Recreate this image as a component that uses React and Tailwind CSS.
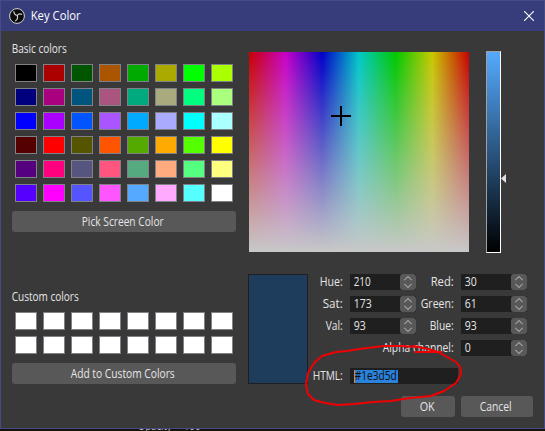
import React from "react";

const BASIC = [
  ["#000000", "#aa0000", "#005500", "#aa5500", "#00aa00", "#aaaa00", "#00ff00", "#aaff00"],
  ["#00007f", "#aa007f", "#00557f", "#aa557f", "#00aa7f", "#aaaa7f", "#00ff7f", "#aaff7f"],
  ["#0000ff", "#aa00ff", "#0055ff", "#aa55ff", "#00aaff", "#aaaaff", "#00ffff", "#aaffff"],
  ["#550000", "#ff0000", "#555500", "#ff5500", "#55aa00", "#ffaa00", "#55ff00", "#ffff00"],
  ["#55007f", "#ff007f", "#55557f", "#ff557f", "#55aa7f", "#ffaa7f", "#55ff7f", "#ffff7f"],
  ["#5500ff", "#ff00ff", "#5555ff", "#ff55ff", "#55aaff", "#ffaaff", "#55ffff", "#ffffff"],
].flat();
const CUSTOM = Array(16).fill("#ffffff");

function Swatches({ colors }) {
  return (
    <div className="grid grid-cols-[repeat(8,22px)] gap-x-[6px] gap-y-[6px] pl-[3px]">
      {colors.map((c, i) => (
        <div key={i} className="h-[18px] w-[22px] border border-[#808087]" style={{ backgroundColor: c }} />
      ))}
    </div>
  );
}

function Text({ children, w }) {
  return (
    <svg className="block h-4 overflow-visible" width={w} height="16">
      <text x="-0.3" y="12" textLength={w} lengthAdjust="spacingAndGlyphs" fill="currentColor">{children}</text>
    </svg>
  );
}

function Button({ children, w, className }) {
  return (
    <button className={`flex h-[21px] items-center justify-center rounded-[3px] bg-[#585858] pr-[2px] ${className}`}>
      <Text w={w}>{children}</Text>
    </button>
  );
}

function Spin({ value, w }) {
  return (
    <div className="flex h-4 w-[66px] bg-[#1f1f1f]">
      <div className="flex-1 pl-[4px]"><Text w={w}>{value}</Text></div>
      <div className="h-4 w-4 rounded-[3px] bg-[#585858]">
        <svg width="16" height="16" fill="none" stroke="#a0a0a0" strokeWidth="1.1">
          <path d="M4.3 6.2 8 2.5l3.7 3.7M4.3 9.8 8 13.5l3.7-3.7" />
        </svg>
      </div>
    </div>
  );
}

function Field({ label, lw, value, vw }) {
  return (
    <div className="flex justify-end gap-[7px]">
      <Text w={lw}>{label}</Text>
      <Spin value={value} w={vw} />
    </div>
  );
}

export default function App() {
  return (
    <div className="relative flex h-[431px] w-[545px] flex-col overflow-hidden bg-[#161214] font-['Open_Sans',sans-serif] text-[12px] leading-4 text-[#e6e5e6]">
      <div className="flex h-[429px] flex-col border border-[#464c83] bg-[#3a393a]">
        <header className="flex h-[30px] shrink-0 items-center bg-[#373d7b] pl-2 pr-[10px] text-white">
          <svg width="16" height="16" viewBox="0 0 16 16" fill="none">
            <circle cx="8" cy="8" r="7.4" fill="#0c0c0c" stroke="#d5d5d5" strokeWidth="1" />
            <path d="M4.8 3.2c.1 2.4 1.3 3.9 3.5 4.3M13 6.6c-1.8-1-3.7-.7-4.7.9M6.2 12.9c2.1-1 2.8-3.1 2.1-5.4" stroke="#d0d0d0" strokeWidth="1.2" />
          </svg>
          <div className="ml-[6px] flex-1"><Text w={50}>Key Color</Text></div>
          <svg width="10" height="10" stroke="#fff" strokeWidth="1.1"><path d="m0 0 10 10M10 0 0 10" /></svg>
        </header>

        <main className="flex flex-1">
          <section className="flex w-[235px] flex-col pl-[11px] pt-[10px]">
            <Text w={55}>Basic colors</Text>
            <div className="h-[7px]" />
            <Swatches colors={BASIC} />
            <Button w={82} className="mt-[9px] w-[224px]">Pick Screen Color</Button>
            <div className="h-[57px]" />
            <Text w={67}>Custom colors</Text>
            <div className="h-[7px]" />
            <Swatches colors={CUSTOM} />
            <Button w={104} className="mt-[9px] w-[224px]">Add to Custom Colors</Button>
          </section>

          <section className="flex flex-1 flex-col pl-[12px] pt-[20px]">
            <div className="flex h-[203px] items-start">
              <div className="relative ml-px mt-px h-[200px] w-[220px] bg-[linear-gradient(to_bottom,rgba(200,200,200,0),#c8c8c8),linear-gradient(to_right,#c80000,#c800c8,#0000c8,#00c8c8,#00c800,#c8c800,#c80000)]">
                <div className="absolute left-[82px] top-[63px] h-[2px] w-[20px] bg-black" />
                <div className="absolute left-[91px] top-[54px] h-[20px] w-[2px] bg-black" />
              </div>
              <div className="ml-[17px] h-[202px] w-[15px] border border-b-white border-l-[#a0a0a0] border-r-white border-t-[#a0a0a0] bg-[linear-gradient(#55aaff,#000)]" />
              <svg className="mt-[123px]" width="5" height="9"><path d="M0 4.5 5 0v9z" fill="#e1e0e1" /></svg>
            </div>
            <div className="mt-[20px] flex">
              <div className="h-[110px] w-[60px] border border-[#1f1f1f] bg-[#1e3d5d]" />
              <div className="w-[219px]">
                <div className="grid grid-cols-[108px_111px] gap-y-[6px]">
                  <Field label="Hue:" lw={23} value="210" vw={17} />
                  <Field label="Red:" lw={23} value="30" vw={12} />
                  <Field label="Sat:" lw={20} value="173" vw={18} />
                  <Field label="Green:" lw={33} value="61" vw={12} />
                  <Field label="Val:" lw={17} value="93" vw={12} />
                  <Field label="Blue:" lw={24} value="93" vw={12} />
                  <div className="col-span-2"><Field label="Alpha channel:" lw={71} value="0" vw={6} /></div>
                </div>
                <div className="mt-[12px] flex pl-[5px]">
                  <Text w={30}>HTML:</Text>
                  <div className="ml-[7px] flex h-4 w-[108px] bg-[#1f1f1f] pl-[4px]">
                    <div className="mt-[2px] h-[13px] w-px bg-[#f08020]" />
                    <div className="mt-[2px] h-[13px] w-[43px] bg-[#2a82da] text-[#101010]"><div className="-mt-[2px]"><Text w={42}>#1e3d5d</Text></div></div>
                  </div>
                </div>
              </div>
            </div>
            <div className="mt-[12px] flex justify-end gap-[6px] pr-[11px]">
              <Button w={15} className="w-[54px]">OK</Button>
              <Button w={32} className="w-[72px]">Cancel</Button>
            </div>
          </section>
        </main>
      </div>
      <div className="ml-[138px] flex h-[2px] gap-3 overflow-hidden text-[#bbb]">
        <div className="-mt-[11px]"><Text w={34}>Opacity</Text></div>
        <div className="-mt-[11px]"><Text w={17}>100</Text></div>
      </div>
      <svg className="absolute left-0 top-0" width="545" height="431" fill="none" stroke="#f00000" strokeWidth="2" strokeLinecap="round" strokeLinejoin="round">
        <path d="M415 352H427L441 352M420 347 400 346 384 346 359 349 347 351 336 352 322 356 314 363 308 373 306 385 308 394 314 400 325 403 338 405 354 404 373 402 391 401 410 398 431 396 444 391 456 383 461 374 460 367 456 362 447 357 438 352 428 349 414 346" />
      </svg>
    </div>
  );
}
